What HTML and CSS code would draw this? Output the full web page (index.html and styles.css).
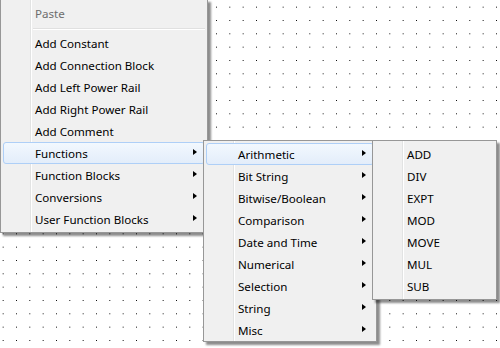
FILE: index.html
```html
<!DOCTYPE html>
<html lang="en">
<head>
    <meta charset="UTF-8">
    <title>Ladder Editor - Context Menu</title>
    <link rel="stylesheet" href="styles.css">
</head>
<body>
    <div class="editor">
        <svg class="grid" width="500" height="348" xmlns="http://www.w3.org/2000/svg">
            <defs>
                <pattern id="dots" x="2.67" y="6.67" width="13.333" height="13.333" patternUnits="userSpaceOnUse">
                    <rect width="1" height="1" fill="#000" shape-rendering="crispEdges"/>
                </pattern>
            </defs>
            <rect width="500" height="348" fill="url(#dots)"/>
        </svg>

        <div class="menu menu-main">
            <div class="item disabled">Paste</div>
            <div class="sep"></div>
            <div class="item">Add Constant</div>
            <div class="item">Add Connection Block</div>
            <div class="item">Add Left Power Rail</div>
            <div class="item">Add Right Power Rail</div>
            <div class="item">Add Comment</div>
            <div class="item active">Functions<span class="arrow"></span></div>
            <div class="item">Function Blocks<span class="arrow"></span></div>
            <div class="item">Conversions<span class="arrow"></span></div>
            <div class="item">User Function Blocks<span class="arrow"></span></div>
        </div>

        <div class="menu menu-functions">
            <div class="item active">Arithmetic<span class="arrow"></span></div>
            <div class="item">Bit String<span class="arrow"></span></div>
            <div class="item">Bitwise/Boolean<span class="arrow"></span></div>
            <div class="item">Comparison<span class="arrow"></span></div>
            <div class="item">Date and Time<span class="arrow"></span></div>
            <div class="item">Numerical<span class="arrow"></span></div>
            <div class="item">Selection<span class="arrow"></span></div>
            <div class="item">String<span class="arrow"></span></div>
            <div class="item">Misc<span class="arrow"></span></div>
        </div>

        <div class="menu menu-arith">
            <div class="item">ADD</div>
            <div class="item">DIV</div>
            <div class="item">EXPT</div>
            <div class="item">MOD</div>
            <div class="item">MOVE</div>
            <div class="item">MUL</div>
            <div class="item">SUB</div>
        </div>
    </div>
</body>
</html>
```

FILE: styles.css
```css
html, body { margin: 0; padding: 0; }
body { width: 500px; height: 348px; overflow: hidden; background-color: #fff; font-family: 'Noto Sans', 'Open Sans', sans-serif; font-size: 11.6px; color: #000; }
.editor { position: relative; width: 500px; height: 348px; }
.grid { display: block; }

/* popup menus sit over the diagram canvas */
.menu { position: absolute; box-sizing: border-box; border: 1px solid #979797; padding: 2px; background: linear-gradient(to right, transparent 29px, #e2e3e3 29px, #e2e3e3 30px, #fff 30px, #fff 31px, transparent 31px), #f0f0f0; box-shadow: 3px 3px 2px rgba(0,0,0,0.45); }
.menu-main { left: 0; top: -1px; width: 208px; z-index: 1; }
.menu-functions { left: 203px; top: 140px; width: 174px; height: 202px; z-index: 2; }
.menu-arith { left: 372px; top: 140px; width: 125px; z-index: 3; }

.item { position: relative; box-sizing: border-box; height: 22px; line-height: 20px; padding: 1px 0 0 31px; border: 1px solid transparent; border-radius: 3px; white-space: nowrap; color: #000; }
.item.disabled { color: #6d6d6d; }
.item.active { border-color: #aecff7; background: linear-gradient(#f2f8fe, #e3edfa); }
.arrow { position: absolute; right: 7px; top: 6px; width: 0; height: 0; border-left: 4px solid #000; border-top: 3.5px solid transparent; border-bottom: 3.5px solid transparent; }

.sep { height: 8px; margin-left: 30px; background: linear-gradient(#e0e0e0, #e0e0e0) no-repeat 0 4px / 100% 1px, linear-gradient(#fff, #fff) no-repeat 0 5px / 100% 1px; }
```
